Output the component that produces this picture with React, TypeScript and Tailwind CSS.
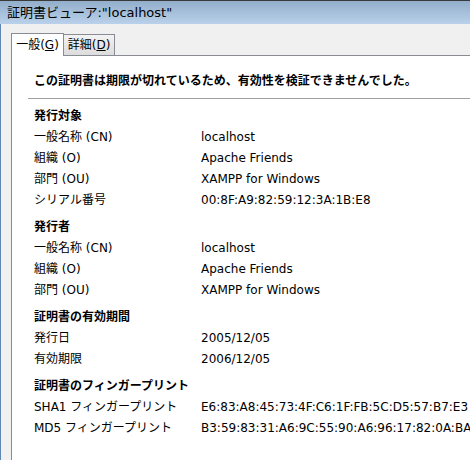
import React from 'react';

type Row = { label: string; value: string };
type Section = { title: string; rows: Row[] };

const sections: Section[] = [
  {
    title: '発行対象',
    rows: [
      { label: '一般名称 (CN)', value: 'localhost' },
      { label: '組織 (O)', value: 'Apache Friends' },
      { label: '部門 (OU)', value: 'XAMPP for Windows' },
      { label: 'シリアル番号', value: '00:8F:A9:82:59:12:3A:1B:E8' },
    ],
  },
  {
    title: '発行者',
    rows: [
      { label: '一般名称 (CN)', value: 'localhost' },
      { label: '組織 (O)', value: 'Apache Friends' },
      { label: '部門 (OU)', value: 'XAMPP for Windows' },
    ],
  },
  {
    title: '証明書の有効期間',
    rows: [
      { label: '発行日', value: '2005/12/05' },
      { label: '有効期限', value: '2006/12/05' },
    ],
  },
  {
    title: '証明書のフィンガープリント',
    rows: [
      { label: 'SHA1 フィンガープリント', value: 'E6:83:A8:45:73:4F:C6:1F:FB:5C:D5:57:B7:E3' },
      { label: 'MD5 フィンガープリント', value: 'B3:59:83:31:A6:9C:55:90:A6:96:17:82:0A:BA' },
    ],
  },
];

export default function App() {
  return (
    <div className="w-[470px] h-[460px] overflow-hidden flex flex-col bg-[#f0f0f0] text-black font-['DejaVu_Sans','Noto_Sans_CJK_JP',sans-serif] text-[12px]">
      {/* title bar */}
      <div className="h-[24px] shrink-0 border-t border-[#3a3a3a] bg-gradient-to-b from-[#93aecb] to-[#b9d1ea] pl-[7px] flex items-center text-[13px] leading-none">
        証明書ビューア:"localhost"
      </div>

      {/* window body */}
      <div className="flex-1 flex flex-col border-l border-[#5f86b3] pl-[10px] pt-[8px] min-h-0">
        {/* tabs */}
        <div className="flex items-end h-[23px] shrink-0">
          <div className="h-[23px] w-[53px] -mb-px relative z-10 bg-white border border-b-0 border-[#898c95] flex items-center justify-center leading-none">
            一般(<span className="underline">G</span>)
          </div>
          <div className="h-[21px] w-[51px] bg-gradient-to-b from-[#f3f3f3] to-[#dcdcdc] border border-l-0 border-b-0 border-[#898c95] flex items-center justify-center leading-none">
            詳細(<span className="underline">D</span>)
          </div>
        </div>

        {/* panel */}
        <div className="flex-1 bg-white border-l border-t border-[#898c95] pl-[22px] pt-[15px]">
          <div className="font-bold h-[20px] flex items-center">
            この証明書は期限が切れているため、有効性を検証できませんでした。
          </div>
          <div className="h-px bg-[#a0a0a0] -ml-[6px] mt-[7px] mb-[6px]" />

          <div className="flex flex-col gap-[6px]">
            {sections.map((s) => (
              <div key={s.title} className="flex flex-col">
                <div className="font-bold h-[21px] flex items-center">{s.title}</div>
                {s.rows.map((r) => (
                  <div key={r.label} className="flex h-[21px] items-center whitespace-nowrap">
                    <div className="w-[167px] shrink-0">{r.label}</div>
                    <div>{r.value}</div>
                  </div>
                ))}
              </div>
            ))}
          </div>
        </div>
      </div>
    </div>
  );
}
